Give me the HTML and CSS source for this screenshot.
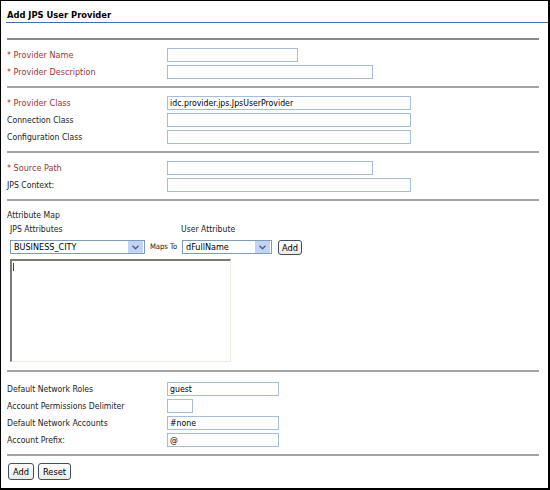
FILE: index.html
```html
<!DOCTYPE html>
<html lang="en">
<head>
    <meta charset="UTF-8">
    <title>Add JPS User Provider</title>
    <link rel="stylesheet" href="styles.css">
</head>
<body>
    <div class="frame">
        <div class="title">Add JPS User Provider</div>

        <!-- provider -->
        <div class="section s-first">
            <div class="row"><span class="label req">* Provider Name</span><input class="field w-m" type="text"></div>
            <div class="row"><span class="label req">* Provider Description</span><input class="field w-l" type="text"></div>
        </div>

        <!-- classes -->
        <div class="section">
            <div class="row"><span class="label req">* Provider Class</span><input class="field w-xl" type="text" value="idc.provider.jps.JpsUserProvider"></div>
            <div class="row"><span class="label">Connection Class</span><input class="field w-xl" type="text"></div>
            <div class="row"><span class="label">Configuration Class</span><input class="field w-xl" type="text"></div>
        </div>

        <!-- source -->
        <div class="section">
            <div class="row"><span class="label req">* Source Path</span><input class="field w-l" type="text"></div>
            <div class="row"><span class="label">JPS Context:</span><input class="field w-xl" type="text"></div>
        </div>

        <!-- attribute map -->
        <div class="section s-map">
            <div class="line">Attribute Map</div>
            <div class="map-head"><span class="col-a">JPS Attributes</span><span>User Attribute</span></div>
            <div class="map-row">
                <div class="combo combo-a">
                    <span class="combo-text">BUSINESS_CITY</span>
                    <span class="combo-arrow"><svg width="7" height="5" viewBox="0 0 7 5"><path d="M0.5 0.8 L3.5 3.8 L6.5 0.8" fill="none" stroke="#4d6185" stroke-width="1.4"/></svg></span>
                </div>
                <span class="maps-to">Maps To</span>
                <div class="combo combo-b">
                    <span class="combo-text">dFullName</span>
                    <span class="combo-arrow"><svg width="7" height="5" viewBox="0 0 7 5"><path d="M0.5 0.8 L3.5 3.8 L6.5 0.8" fill="none" stroke="#4d6185" stroke-width="1.4"/></svg></span>
                </div>
                <button class="btn btn-small">Add</button>
            </div>
            <div class="map-list"><span class="caret"></span></div>
        </div>

        <!-- network -->
        <div class="section s-net">
            <div class="row"><span class="label">Default Network Roles</span><input class="field w-s" type="text" value="guest"></div>
            <div class="row"><span class="label">Account Permissions Delimiter</span><input class="field w-xs" type="text"></div>
            <div class="row"><span class="label">Default Network Accounts</span><input class="field w-s" type="text" value="#none"></div>
            <div class="row"><span class="label">Account Prefix:</span><input class="field w-s" type="text" value="@"></div>
        </div>

        <div class="section s-buttons">
            <button class="btn">Add</button>
            <button class="btn">Reset</button>
        </div>
    </div>
</body>
</html>
```

FILE: styles.css
```css
*{
    margin: 0;
    padding: 0;
    box-sizing: border-box;
}
body{
    background-color: #fff;
    font-family: Tahoma, "DejaVu Sans Condensed", "Liberation Sans", sans-serif;
    font-size: 8.6px;
    color: #222;
}
.frame{
    width: 550px;
    height: 490px;
    border-style: solid;
    border-color: #000;
    border-width: 1px 2px 2px 1px;
    background-color: #fff;
}
.title{
    height: 22px;
    margin-left: 5px;
    padding: 8px 0 0 1px;
    line-height: 12px;
    font-size: 9.3px;
    font-weight: bold;
    color: #000;
    border-bottom: 1px solid #3f6fa6;
}
.section{
    margin: 0 9px 0 6px;
    padding: 7px 0 8px;
    border-top: 2px solid #a3a3a3;
    display: flex;
    flex-direction: column;
    gap: 3px;
}
.s-first{
    margin-top: 15px;
    border-top-color: #8a8a8a;
}
.s-net{
    padding-top: 9px;
}
.s-buttons{
    flex-direction: row;
    gap: 4px;
    padding: 7px 0 0 1px;
}
.row{
    display: grid;
    grid-template-columns: 160px auto;
    align-items: center;
    height: 14px;
}
.label{
    line-height: 14px;
    white-space: nowrap;
    padding-top: 1px;
}
.req{
    color: #a03636;
    font-size: 9px;
}
.field{
    height: 14px;
    border: 1px solid #a9bdd8;
    padding: 0 2px;
    font-family: inherit;
    font-size: 8.7px;
    color: #000;
    background-color: #fff;
    outline: none;
}
.w-xs{ width: 26px; }
.w-s{ width: 112px; }
.w-m{ width: 131px; }
.w-l{ width: 206px; }
.w-xl{ width: 244px; }

.s-map{
    gap: 0;
}
.line{
    line-height: 14px;
}
.map-head{
    display: flex;
    line-height: 14px;
    padding-left: 3px;
}
.col-a{
    width: 171px;
}
.map-row{
    display: flex;
    align-items: flex-start;
    margin-top: 4px;
    padding-left: 3px;
    height: 15px;
}
.combo{
    height: 14px;
    border: 1px solid #7f9db9;
    display: flex;
    align-items: center;
    justify-content: space-between;
    background-color: #fff;
    color: #000;
    font-size: 9px;
}
.combo-a{ width: 135px; }
.combo-b{ width: 90px; }
.combo-text{
    padding-left: 3px;
}
.combo-arrow{
    width: 15px;
    height: 12px;
    margin-right: 1px;
    background-color: #c3d3f7;
    display: flex;
    align-items: center;
    justify-content: center;
}
.maps-to{
    width: 37px;
    text-align: center;
    font-size: 7.6px;
    line-height: 14px;
}
.btn{
    height: 17px;
    padding: 0 4px;
    border: 1px solid #3f4f66;
    border-radius: 3px;
    background: linear-gradient(#ffffff, #ecebe4);
    font-family: inherit;
    font-size: 9.2px;
    color: #000;
}
.btn-small{
    height: 15px;
    margin-left: 6px;
    padding: 0 3px;
}
.map-list{
    width: 221px;
    height: 103px;
    margin: 4px 0 0 3px;
    border-style: solid;
    border-width: 2px 1px 1px 2px;
    border-color: #7b7b73 #ecebe2 #ecebe2 #7b7b73;
    position: relative;
}
.caret{
    position: absolute;
    left: 1px;
    top: 2px;
    width: 1px;
    height: 8px;
    background-color: #444;
}
```
